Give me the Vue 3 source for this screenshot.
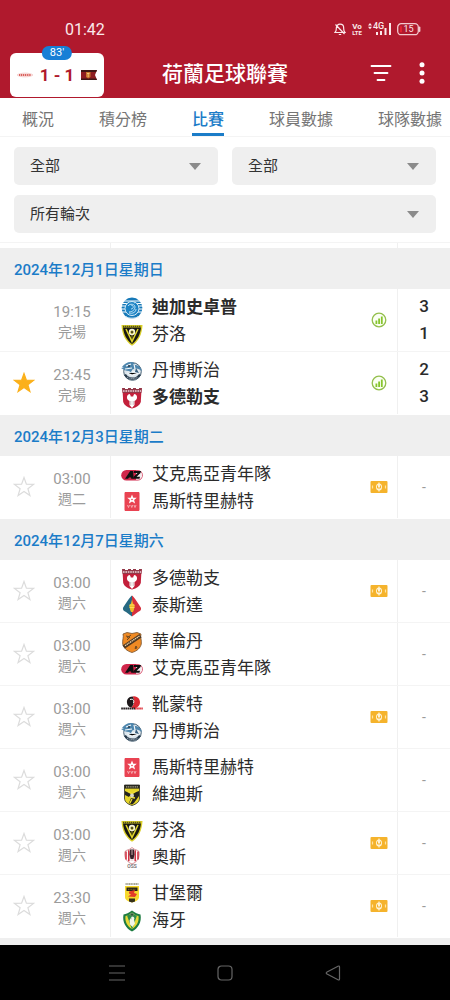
<script setup>
import { ref } from "vue";

const tabs = ["概況", "積分榜", "比賽", "球員數據", "球隊數據"];
const activeTab = ref("比賽");

// media is one of ["stats", "tv", ""], star is one of ["on", "off", ""]
const days = ref([
  {
    date: "2024年12月1日星期日",
    matches: [
      {
        time: "19:15",
        label: "完場",
        star: "",
        media: "stats",
        teams: [
          { name: "迪加史卓普", logo: "graafschap", score: 3, winner: true },
          { name: "芬洛", logo: "venlo", score: 1 },
        ],
      },
      {
        time: "23:45",
        label: "完場",
        star: "on",
        media: "stats",
        teams: [
          { name: "丹博斯治", logo: "denbosch", score: 2 },
          { name: "多德勒支", logo: "dordrecht", score: 3, winner: true },
        ],
      },
    ],
  },
  {
    date: "2024年12月3日星期二",
    matches: [
      {
        time: "03:00",
        label: "週二",
        star: "off",
        media: "tv",
        teams: [
          { name: "艾克馬亞青年隊", logo: "az" },
          { name: "馬斯特里赫特", logo: "mvv" },
        ],
      },
    ],
  },
  {
    date: "2024年12月7日星期六",
    matches: [
      {
        time: "03:00",
        label: "週六",
        star: "off",
        media: "tv",
        teams: [
          { name: "多德勒支", logo: "dordrecht" },
          { name: "泰斯達", logo: "telstar" },
        ],
      },
      {
        time: "03:00",
        label: "週六",
        star: "off",
        media: "",
        teams: [
          { name: "華倫丹", logo: "volendam" },
          { name: "艾克馬亞青年隊", logo: "az" },
        ],
      },
      {
        time: "03:00",
        label: "週六",
        star: "off",
        media: "tv",
        teams: [
          { name: "靴蒙特", logo: "helmond" },
          { name: "丹博斯治", logo: "denbosch" },
        ],
      },
      {
        time: "03:00",
        label: "週六",
        star: "off",
        media: "",
        teams: [
          { name: "馬斯特里赫特", logo: "mvv" },
          { name: "維迪斯", logo: "vitesse" },
        ],
      },
      {
        time: "03:00",
        label: "週六",
        star: "off",
        media: "tv",
        teams: [
          { name: "芬洛", logo: "venlo" },
          { name: "奧斯", logo: "oss" },
        ],
      },
      {
        time: "23:30",
        label: "週六",
        star: "off",
        media: "tv",
        teams: [
          { name: "甘堡爾", logo: "cambuur" },
          { name: "海牙", logo: "denhaag" },
        ],
      },
    ],
  },
]);

function toggleStar(match) {
  match.star = match.star == "on" ? "off" : "on";
}
</script>

<template>
  <div class="app">
    <!-- club logos, used by id in the list -->
    <svg class="sprite" aria-hidden="true">
      <symbol id="graafschap" viewBox="0 0 22 22">
        <circle cx="11" cy="11" r="10.4" fill="#1679b8" />
        <path d="M0 6.5h22M0 9h5M17 9h5M0 12h4M18 12h4M1 15h4M17 15h4M2 4h18" stroke="#fff" stroke-width="1" />
        <circle cx="11" cy="11.5" r="7" fill="#1c83c4" stroke="#d8eefa" stroke-width="1" />
        <path d="M7 9c2-3 7-2 7 1s-3 5-6 5M10 8c3 0 3 4 0 4M13 6l2-1M8 16c4 1 7-1 7-4" fill="none" stroke="#b9e0f6" stroke-width="1" />
        <path d="M4 19.5c4 2.2 10 2.2 14 0" fill="none" stroke="#cfe6f3" stroke-width="1" />
      </symbol>
      <symbol id="venlo" viewBox="0 0 22 22">
        <path d="M.5 1h21c-.4 9-3.500 16-10.500 20.800C4 17 .9 10 .5 1z" fill="#d9cf2a" />
        <path d="M2 3.500h18c-.8 7-3.500 12.500-9 16.500C5.500 16 2.800 10.500 2 3.500z" fill="#181712" />
        <path d="M2 2.600h18" stroke="#55501a" stroke-width="1.600" stroke-dasharray="1.400 .6" />
        <path d="M5 5l6 12.500L17 5" fill="none" stroke="#e2d72c" stroke-width="1.500" />
        <circle cx="11" cy="8" r="3.200" fill="#f3f1dc" />
        <path d="M11 6.500l1.500 1.200-.6 1.700h-1.800L9.500 7.700zM11 11v6" fill="#222" stroke="#e2d72c" stroke-width=".6" />
      </symbol>
      <symbol id="denbosch" viewBox="0 0 22 22">
        <circle cx="11.500" cy="11.500" r="8.800" fill="#dce6ed" stroke="#4b6375" stroke-width="1" />
        <path d="M1 7c2-3 5-5 9-5 3 0 4 2 4 3 3 0 6 2 7 6-3-2-5-3-8-2-2 0-3 2-2 4l-3-2c-3 0-5-1-8-3l3-.5z" fill="#4e86ad" />
        <path d="M5 6l5-2M4 9l7-1M10 12l8-1M6 13l5 2 7-2M13 4l1 5" stroke="#f5f9fb" stroke-width="1.200" />
        <path d="M4 14.500c3 5 11 6 15 0" fill="none" stroke="#27394a" stroke-width="2.200" />
        <path d="M6 17c3 2 8 2 11 0" fill="none" stroke="#c4d2dc" stroke-width=".8" stroke-dasharray="1.200 .7" />
        <circle cx="8" cy="6" r=".9" fill="#1d2c39" />
        <path d="M15 8l3 5-4-1z" fill="#365e7e" />
      </symbol>
      <symbol id="dordrecht" viewBox="0 0 22 22">
        <path d="M1.500 2h19l-.7 13c-1 3-4 5.500-8.800 6.500C6.200 20.500 3.200 18 2.200 15z" fill="#c3203b" />
        <path d="M1 1h3v1h3V1h3v1h2V1h3v1h3V1h3l-.6 5H1.600z" fill="#943748" />
        <path d="M2 4h18" stroke="#e9d5d8" stroke-width="1.600" stroke-dasharray="1.600 .8" />
        <path d="M7.500 7.500c1-1 2 0 2.300 2h2.400c.3-2 1.300-3 2.300-2 2 1 2 4 .5 5.500l-1.500 1v4l-2.500 3-2.500-3v-4l-1.500-1C5.500 11.500 5.500 8.500 7.500 7.500z" fill="#fff" />
        <path d="M9.800 14v4M12.200 14v4" stroke="#a88b90" stroke-width=".6" />
      </symbol>
      <symbol id="az" viewBox="0 0 22 22">
        <rect x=".2" y="6" width="21.600" height="10.400" rx="5.200" fill="#d0274b" />
        <path d="M15 6.700h1.800a4.500 4.500 0 0 1 0 9H15z" fill="#f5e9ec" />
        <path d="M4 14.800L9.200 7H12l.8 7.800h-2.600l-.1-1.300H8l-.9 1.300z" fill="#101010" />
        <path d="M13 7h7l-.5 2-3.900 3.800H19l-.5 2h-6.300l.5-2 3.800-3.800h-3.900z" fill="#101010" />
      </symbol>
      <symbol id="mvv" viewBox="0 0 22 22">
        <path d="M4 1.500h14v18H4z" fill="#e94352" stroke="#e94352" stroke-linejoin="round" />
        <path d="M11 3.500l1.300 3.200 3.500.1-2.700 2.200 1 3.400-3.100-1.900-3.100 1.900 1-3.400L6.200 6.800l3.500-.1z" fill="#fff" />
        <circle cx="11" cy="8.500" r=".8" fill="#e94352" />
        <path d="M6.500 14l1 2.500 1-2.500M9.800 14l1 2.500 1-2.500M13 14l1 2.500 1-2.500" fill="none" stroke="#f8bfc3" stroke-width=".8" />
      </symbol>
      <symbol id="telstar" viewBox="0 0 22 22">
        <path d="M11 .5C12 .5 19.500 11.500 20 13c.5 2-1 3-3 4l-6 4.500z" fill="#d5303c" />
        <path d="M11 .5C10 .5 2.500 11.500 2 13c-.5 2 1 3 3 4l6 4.500z" fill="#276982" />
        <path d="M11 4.500l1 4 1.800 2-1 4.500-.8 2h-2l-.8-2-1-4.500 1.800-2z" fill="#f0bb28" />
        <path d="M8.500 10h5M8.500 12.500h5" stroke="#ffe46b" stroke-width=".8" />
      </symbol>
      <symbol id="volendam" viewBox="0 0 22 22">
        <path d="M2 3l4-1.500 5 1 5-1L20 3c-1 3 .8 6 .3 10-1 4-4 7-9.300 8.500C5.700 20 2.700 17 1.700 13 1.200 9 3 6 2 3z" fill="#ef8a24" stroke="#76502c" stroke-width=".8" />
        <path d="M1.500 14.500L18.500 3l2 3.500L4 17.500z" fill="#4d3824" />
        <path d="M4 14.700L18.500 5" stroke="#ecd4ad" stroke-width="1.300" stroke-dasharray="1.400 .6" />
        <path d="M5 5l4 1-3 3M6 7l4-3M15 15l1 2-2 .5z" fill="none" stroke="#6d4721" stroke-width="1" />
      </symbol>
      <symbol id="helmond" viewBox="0 0 22 22">
        <path d="M11.500 2.500a6 6 0 1 1-1.500 11c3.500-2 4-8 1.500-11z" fill="#db2932" />
        <path d="M11.500 2.500c-4 0-6 3-5.500 6.500.3 2.500 2 4.200 4 4.500 3.300-2.500 4-8 1.500-11z" fill="#1e191b" />
        <path d="M9 5.500c3-1 4.500 1 3.500 3.500" fill="none" stroke="#fff" stroke-width="1" />
        <path d="M.2 14.600h14" stroke="#2a2426" stroke-width="2" stroke-dasharray="1.700 .4" />
        <path d="M14 14.600h7.800" stroke="#df3942" stroke-width="2" stroke-dasharray="1.700 .4" />
      </symbol>
      <symbol id="vitesse" viewBox="0 0 22 22">
        <path d="M3.500 1h15v13c0 4-3 6-7.500 7.500C6.500 20 3.500 18 3.500 14z" fill="#e5d52a" stroke="#2a2920" stroke-width=".8" />
        <path d="M3.500 1h15v3.600h-15z" fill="#262620" />
        <path d="M5 2.800h12" stroke="#aaa587" stroke-width="1.200" stroke-dasharray="1.200 .6" />
        <path d="M4 7l6 3 8-3v5l-5 7-2 1.500L8 19l2-5-6-3z" fill="#24231e" />
        <path d="M7 7l4 3 4-3M8 13l6 1M11 15l-2 4" fill="none" stroke="#efdf32" stroke-width="1.300" />
        <circle cx="11" cy="11.500" r="2" fill="#d8d6c8" />
      </symbol>
      <symbol id="oss" viewBox="0 0 22 22">
        <path d="M4 4.500C6 2.500 8 3 9 2l2-1.500L13 2c1 1 3 .5 5 2.500.8 6-1 10-7 12.500C5 14.500 3.200 10.500 4 4.500z" fill="#fff" stroke="#bb4b55" stroke-width=".6" />
        <path d="M5 4.500v8M7.800 3.300v11M14.200 3.300v11M17 4.500v8" stroke="#cf2a3b" stroke-width="1.500" />
        <path d="M9 2.500h4l.5 5L12.500 12h-3l-1-4.500z" fill="#372229" />
        <path d="M11 3v5M9.500 13h3" stroke="#d9b9b9" stroke-width=".9" />
        <text x="11" y="21.300" text-anchor="middle" font-size="5" font-weight="500" fill="#68605f">OSS</text>
      </symbol>
      <symbol id="cambuur" viewBox="0 0 22 22">
        <path d="M4.500 1h13" stroke="#8c8c78" stroke-width="1.600" stroke-dasharray="1.300 .4" />
        <path d="M4 3h14v11c0 3-3 4.500-7 5.500-4-1-7-2.500-7-5.500z" fill="#f6d92e" />
        <path d="M5.500 4.500h11V8h-11z" fill="#262116" />
        <path d="M8 8.500l6-1.500-1 3 3 1-2 3-7-.5 3-2-2-1z" fill="#e33b27" />
        <path d="M8 15.500h6v3L11 19.500 8 18.500z" fill="#35301a" />
        <path d="M7 6.300h8" stroke="#c5ad2a" stroke-width=".6" stroke-dasharray="1 .6" />
      </symbol>
      <symbol id="denhaag" viewBox="0 0 22 22">
        <path d="M2.500 4.500C5 4 8 3 11 .5c3 2.500 6 3.500 8.500 4C21 12 17 18.500 11 21.500 5 18.500 1 12 2.500 4.500z" fill="#1e7c42" />
        <path d="M4.500 6C7 5.500 9 4.500 11 2.500c2 2 4 3 6.500 3.500.8 6-2 10.500-6.500 13C6.500 16.500 3.700 12 4.500 6z" fill="#e7da37" />
        <path d="M6 5.500l5 14 5-14c-2-.3-3.500-1.300-5-3-1.500 1.700-3 2.500-5 3z" fill="#2c8b4a" />
        <path d="M11 6.500c2 0 3 1.500 2 3l1 4-2.500 3.500-2.500-2.500-.5-4 1-2z" fill="#f2f5e9" />
        <path d="M9.500 3.500h3L12 6h-2zM9 8l2 1" fill="#274f2f" stroke="#8da084" stroke-width=".5" />
      </symbol>
    </svg>

    <header class="topBar">
      <div class="statusBar">
        <span class="clock">01:42</span>
        <div class="statusIcons">
          <svg width="12" height="14" viewBox="0 0 12 14" fill="none" stroke="#fbe9eb" stroke-width="1.200">
            <path d="M1 10.500h10c-1.500-1.500-1.300-2.500-1.300-4.500C9.700 3.600 8 2.200 6 2.200S2.300 3.600 2.300 6c0 2 .2 3-1.300 4.500zM4.800 12.500h2.400M1.500 2.500l9 9.500" />
          </svg>
          <svg width="12" height="14" viewBox="0 0 12 14" fill="#fbe9eb" font-weight="700" text-anchor="middle">
            <text x="6" y="7" font-size="8">Vo</text>
            <text x="6" y="13" font-size="6">LTE</text>
          </svg>
          <svg width="24" height="14" viewBox="0 0 24 14" fill="#fbe9eb">
            <path d="M0 3.500L2 1l2 2.500zM0 4.800L2 7.300l2-2.500z" />
            <text x="5" y="7" font-size="9" font-weight="500">4G</text>
            <path d="M8 10h2v3H8zM12 9h2v4h-2zM16.500 6h2v7h-2zM21 1h2v12h-2z" />
          </svg>
          <svg width="24" height="14" viewBox="0 0 24 14">
            <rect x=".7" y="1.700" width="20.600" height="11" rx="3.500" fill="none" stroke="#f3c9ce" stroke-width="1.300" />
            <path d="M3 4.200h2v6H3z" fill="#e2202f" />
            <path d="M22.500 5.500v3.500" stroke="#f3c9ce" stroke-width="1.800" stroke-linecap="round" />
            <text x="11.500" y="10.300" font-size="9" text-anchor="middle" fill="#fbe9eb">15</text>
          </svg>
        </div>
      </div>

      <div class="toolbar">
        <a class="liveCard" href="#">
          <span class="minute">83'</span>
          <svg width="16" height="8" viewBox="0 0 16 8">
            <path d="M0 4c3-2.500 13-2.500 16 0-3 2.500-13 2.500-16 0z" fill="#fdeeee" stroke="#eba9a6" stroke-width=".5" />
            <path d="M2 4h12" stroke="#d9615c" stroke-width="1.800" stroke-dasharray="1.300 .6" />
          </svg>
          <strong>1 - 1</strong>
          <svg width="16" height="12" viewBox="0 0 16 12">
            <path d="M0 1h16l-2 5 2 5H0z" fill="#8e1d20" />
            <path d="M0 1h16l-.8 2H0zM0 9.500h15.300L16 11H0z" fill="#3f1714" />
            <path d="M5 3h4.500v5L7.200 9.500 5 8z" fill="#c8772c" />
            <path d="M6 4.500h2.500M7.200 4v4" stroke="#ffd98a" stroke-width=".7" />
          </svg>
        </a>
        <h1>荷蘭足球聯賽</h1>
        <div class="actions">
          <button type="button" aria-label="篩選">
            <svg width="22" height="18" viewBox="0 0 22 18" stroke="#fff" stroke-width="1.800" stroke-linecap="round">
              <path d="M1.500 2h19M4.500 9h13M7.500 16h7" />
            </svg>
          </button>
          <button type="button" aria-label="更多">
            <svg width="6" height="22" viewBox="0 0 6 22" fill="#fff">
              <circle cx="3" cy="2.700" r="2.500" />
              <circle cx="3" cy="11" r="2.500" />
              <circle cx="3" cy="19.300" r="2.500" />
            </svg>
          </button>
        </div>
      </div>
    </header>

    <nav class="tabs">
      <a
        v-for="tab in tabs"
        :key="tab"
        href="#"
        :class="{ active: tab == activeTab }"
        @click.prevent="activeTab = tab"
        >{{ tab }}</a
      >
    </nav>

    <form class="filters">
      <label class="selectBox">
        <select aria-label="球隊">
          <option>全部</option>
        </select>
      </label>
      <label class="selectBox">
        <select aria-label="狀態">
          <option>全部</option>
        </select>
      </label>
      <label class="selectBox wide">
        <select aria-label="輪次">
          <option>所有輪次</option>
        </select>
      </label>
    </form>

    <main class="list">
      <!-- bottom edge of the row scrolled under the filters -->
      <div class="match rowEdge">
        <div class="teams"></div>
        <div class="scores"></div>
      </div>

      <section v-for="day in days" :key="day.date">
        <h2>{{ day.date }}</h2>
        <article v-for="(match, i) in day.matches" :key="i" class="match">
          <button
            v-if="match.star"
            type="button"
            class="star"
            :class="{ on: match.star == 'on' }"
            aria-label="收藏"
            @click="toggleStar(match)"
          >
            <svg width="22" height="22" viewBox="0 0 22 22">
              <path d="M11 1.500l2.400 6.700 7.100.2-5.600 4.300 2 6.800-5.900-4-5.900 4 2-6.800-5.600-4.300 7.100-.2z" />
            </svg>
          </button>
          <div class="when">
            <time>{{ match.time }}</time>
            <span>{{ match.label }}</span>
          </div>
          <div class="teams">
            <div
              v-for="team in match.teams"
              :key="team.name"
              class="team"
              :class="{ winner: team.winner }"
            >
              <svg width="22" height="22"><use :href="'#' + team.logo" /></svg>
              <span>{{ team.name }}</span>
            </div>
          </div>
          <div class="media">
            <svg v-if="match.media == 'stats'" width="16" height="16" viewBox="0 0 16 16">
              <circle cx="8" cy="8" r="6.800" fill="#fbfff4" stroke="#93bf4c" stroke-width="1.300" />
              <path d="M4.500 8.500h1.800V12H4.500zM7.200 6.500H9V12H7.200zM9.900 4.500h1.800V12H9.900z" fill="#86c52d" />
            </svg>
            <svg v-if="match.media == 'tv'" width="18" height="14" viewBox="0 0 18 14">
              <rect x=".5" y="1" width="17" height="12" rx="1" fill="#f5b32c" />
              <ellipse cx="9" cy="7" rx="3" ry="3.600" fill="#fff3d5" />
              <path d="M9 2.500v9" stroke="#fff3d5" stroke-width="1.200" />
              <path d="M7.500 5.500v2.500h3V5.500" fill="none" stroke="#f5b32c" stroke-width="1" />
              <path d="M2.500 5.500v3M15.500 5.500v3" stroke="#ffe3a3" stroke-width="1.200" />
            </svg>
          </div>
          <div class="scores">
            <template v-if="match.teams[0].score != undefined">
              <span v-for="team in match.teams" :key="team.name">{{ team.score }}</span>
            </template>
            <span v-else class="none">-</span>
          </div>
        </article>
      </section>
    </main>

    <footer class="navBar">
      <button type="button" aria-label="最近">
        <svg width="16" height="16" viewBox="0 0 16 16">
          <path d="M0 1h16M0 8h16M0 15h16" />
        </svg>
      </button>
      <button type="button" aria-label="主畫面">
        <svg width="16" height="16" viewBox="0 0 16 16">
          <rect x="1" y="1" width="14" height="14" rx="3.500" />
        </svg>
      </button>
      <button type="button" aria-label="返回">
        <svg width="16" height="16" viewBox="0 0 16 16">
          <path d="M14.500 2v12c0 1-.7 1.200-1.500.8L2 9c-1-.5-1-1.500 0-2l11-5.800c.8-.4 1.500-.2 1.500.8z" />
        </svg>
      </button>
    </footer>
  </div>
</template>

<style>
body {
  margin: 0;
  background: #fff;
}
</style>

<style scoped>
.app {
  min-height: 100vh;
  display: flex;
  flex-direction: column;
  font-family: Roboto, "Noto Sans CJK TC", sans-serif;
  color: #2b2b2b;
  background: #fff;
}

.app *,
.app *::after {
  box-sizing: border-box;
}

svg {
  display: block;
  flex-shrink: 0;
}

.sprite {
  display: none;
}

button {
  border: 0;
  padding: 0;
  background: none;
  display: flex;
  align-items: center;
  justify-content: center;
  cursor: pointer;
}

a {
  text-decoration: none;
}

.topBar {
  background: #b0192d;
  color: #fff;
}

.statusBar {
  display: flex;
  align-items: center;
  justify-content: space-between;
  height: 52px;
  padding: 6px 29px 0 65px;
}

.clock {
  font-size: 16px;
  color: #fbe9eb;
}

.statusIcons {
  display: flex;
  align-items: center;
  gap: 5px;
}

.toolbar {
  display: grid;
  grid-template-columns: 1fr auto 1fr;
  align-items: center;
  height: 46px;
  padding: 0 10px;
}

.liveCard {
  position: relative;
  display: flex;
  align-items: center;
  justify-content: space-between;
  width: 94px;
  height: 44px;
  padding: 0 7px;
  border-radius: 6px;
  background: #fff;
  color: #b0192d;
}

.liveCard strong {
  font-size: 17px;
  white-space: nowrap;
}

.minute {
  position: absolute;
  top: -7px;
  left: 50%;
  transform: translateX(-50%);
  padding: 0 8px;
  border-radius: 7px;
  background: #177fd6;
  color: #fff;
  font-size: 11px;
  line-height: 14px;
}

.toolbar h1 {
  margin: 0;
  padding-bottom: 2px;
  font-size: 21px;
  line-height: 32px;
  font-weight: 500;
}

.actions {
  display: flex;
  justify-content: flex-end;
  gap: 13px;
  padding: 0 4px 4px 0;
}

.actions button {
  width: 28px;
  height: 32px;
}

.tabs {
  display: flex;
  gap: 45px;
  padding: 0 22px;
  overflow: hidden;
  border-bottom: 1px solid #f4f4f4;
}

.tabs a {
  flex-shrink: 0;
  padding-top: 9px;
  border-bottom: 3px solid transparent;
  font-size: 16px;
  line-height: 26px;
  color: #757575;
}

.tabs a.active {
  color: #1b7cc8;
  border-color: #1b7cc8;
  font-weight: 500;
}

.filters {
  display: grid;
  grid-template-columns: 1fr 1fr;
  gap: 10px 14px;
  padding: 10px 14px 9px;
}

.selectBox {
  position: relative;
}

.selectBox.wide {
  grid-column: span 2;
}

.selectBox select {
  display: block;
  width: 100%;
  height: 38px;
  padding: 0 30px 0 16px;
  border: 0;
  border-radius: 5px;
  appearance: none;
  background: #efefef;
  color: #333;
  font-family: inherit;
  font-size: 15px;
}

.selectBox::after {
  content: "";
  position: absolute;
  right: 17px;
  top: 16px;
  border: 6px solid transparent;
  border-top: 7px solid #8b8b8b;
  border-bottom: 0;
  pointer-events: none;
}

.list {
  flex: 1;
  background: #efefef;
}

.list h2 {
  margin: 0;
  padding: 3px 14px 0;
  font-size: 15px;
  line-height: 38px;
  font-weight: 500;
  color: #1b7cc8;
}

.match {
  display: grid;
  grid-template-columns: 48px 62px 1fr 36px 53px;
  height: 63px;
  background: #fff;
  border-bottom: 1px solid #f4f4f4;
}

.match:last-child {
  border-bottom-color: #fff;
}

.rowEdge {
  height: 6px;
  border-top: 1px solid #f4f4f4;
  border-bottom: 0;
}

.star {
  grid-column: 1;
}

.star path {
  fill: #fff;
  stroke: #dcdcdc;
  stroke-width: 1.2;
}

.star.on path {
  fill: #fbb01a;
  stroke: #fbb01a;
}

.when {
  grid-column: 2;
  display: flex;
  flex-direction: column;
  align-items: center;
  justify-content: center;
  padding: 3px 14px 0 0;
  color: #9b9b9b;
  line-height: 20px;
}

.when time {
  font-size: 15px;
}

.when span {
  font-size: 14px;
}

.teams {
  grid-column: 3;
  display: flex;
  flex-direction: column;
  justify-content: center;
  padding: 2px 0 0 10px;
  border-left: 1px solid #f0f0f0;
}

.rowEdge .teams {
  padding: 0;
}

.team {
  display: flex;
  align-items: center;
  gap: 9px;
  font-size: 17px;
  line-height: 27px;
}

.team.winner {
  font-weight: 700;
}

.media {
  display: flex;
  align-items: center;
  justify-content: center;
}

.scores {
  grid-column: 5;
  display: flex;
  flex-direction: column;
  align-items: center;
  justify-content: center;
  border-left: 1px solid #f0f0f0;
  font-size: 17px;
  line-height: 27px;
  font-weight: 500;
}

.scores .none {
  font-size: 14px;
  font-weight: 400;
  color: #9b9b9b;
}

.navBar {
  display: grid;
  grid-template-columns: repeat(3, 24%);
  justify-content: center;
  height: 55px;
  background: #000;
}

.navBar svg {
  fill: none;
  stroke: #666;
  stroke-width: 1.2;
}
</style>
